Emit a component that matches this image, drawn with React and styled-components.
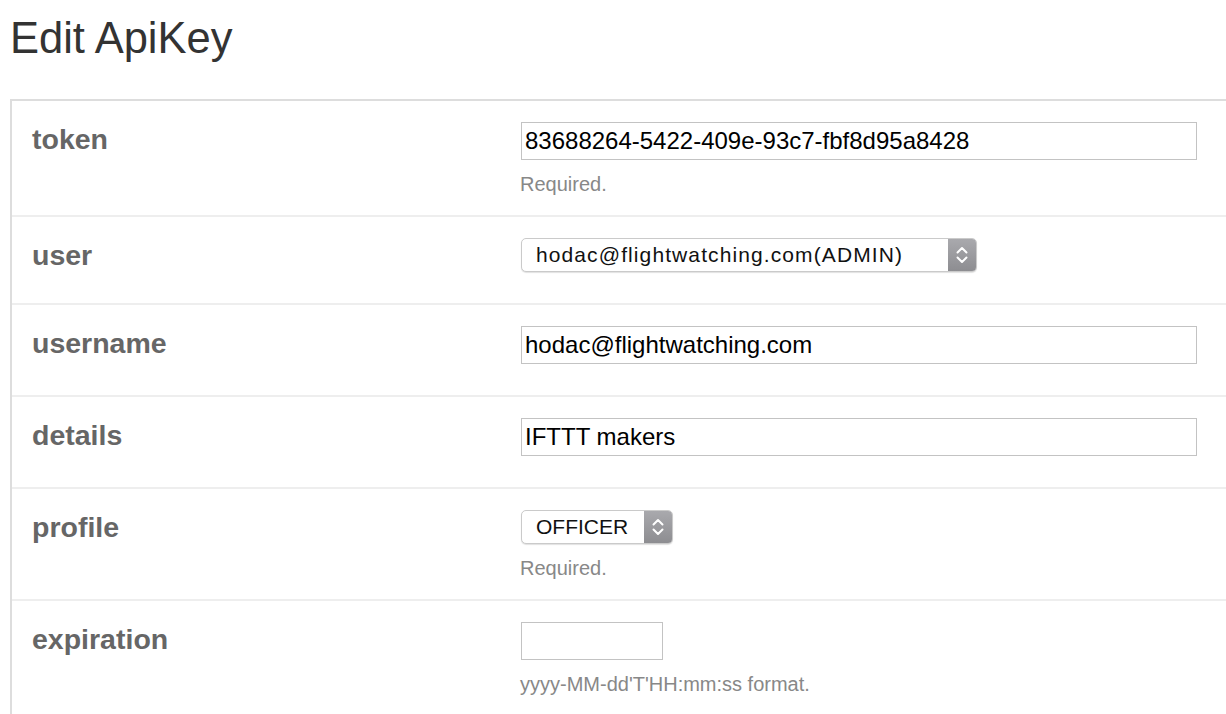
import React from 'react';
import styled, { createGlobalStyle } from 'styled-components';

const GlobalStyle = createGlobalStyle`
    html, body {
        margin: 0;
        padding: 0;
        background: #fff;
        overflow: hidden;
    }
    body {
        font-family: "Liberation Sans", Arial, Helvetica, sans-serif;
    }
`;

const Page = styled.div`
    padding: 14px 0 0 10px;
`;

const Title = styled.h1`
    margin: 0 0 37px 0;
    font-size: 43.5px;
    line-height: 48px;
    font-weight: 400;
    color: #333;
`;

const Panel = styled.div`
    border-top: 2px solid #ddd;
    border-left: 2px solid #ddd;
`;

const Row = styled.div`
    display: grid;
    grid-template-columns: 489px 1fr;
    padding: 21px 0 21px 20px;
    border-top: ${({ first }) => (first ? 'none' : '2px solid #eee')};
`;

const Label = styled.div`
    padding-top: 1px;
    font-size: 28.5px;
    line-height: 32px;
    font-weight: 700;
    color: #666;
`;

const Value = styled.div`
    display: flex;
    flex-direction: column;
    align-items: flex-start;
`;

const Control = styled.div`
    margin-bottom: 10px;
`;

const Input = styled.input`
    box-sizing: border-box;
    width: ${({ width }) => width}px;
    height: 38px;
    margin: 0;
    padding: 0 3px;
    border: 1px solid #c3c3c3;
    border-radius: 0;
    font-family: "Liberation Sans", Arial, sans-serif;
    font-size: 24px;
    color: #000;
    background: #fff;
    outline: none;
`;

const Select = styled.div`
    box-sizing: border-box;
    display: flex;
    align-items: stretch;
    width: ${({ width }) => width}px;
    height: 34px;
    border: 1px solid #cacaca;
    border-radius: 5px;
    box-shadow: 0 1px 1px rgba(0, 0, 0, 0.12);
    background: #fff;
    overflow: hidden;
`;

const SelectText = styled.span`
    flex: 1;
    padding-left: 14px;
    font-size: 21px;
    line-height: 32px;
    letter-spacing: ${({ spacing }) => spacing || 0}px;
    color: #111;
    white-space: nowrap;
`;

const SelectArrow = styled.span`
    width: 28px;
    display: flex;
    align-items: center;
    justify-content: center;
    background: linear-gradient(#a9a9ad, #8d8d91);
`;

const Help = styled.div`
    margin-top: 4px;
    margin-left: -1px;
    font-size: 20px;
    line-height: 20px;
    color: #888;
`;

function Chevrons() {
    return (
        <svg width="14" height="22" viewBox="0 0 14 22" fill="none">
            <path d="M2.5 8.5 L7 4 L11.5 8.5" stroke="#fff" strokeWidth="2" strokeLinecap="round" strokeLinejoin="round" />
            <path d="M2.5 13.5 L7 18 L11.5 13.5" stroke="#fff" strokeWidth="2" strokeLinecap="round" strokeLinejoin="round" />
        </svg>
    );
}

function Field({ label, help, first, children }) {
    return (
        <Row first={first}>
            <Label>{label}</Label>
            <Value>
                <Control>{children}</Control>
                {help && <Help>{help}</Help>}
            </Value>
        </Row>
    );
}

function Dropdown({ value, width, spacing }) {
    return (
        <Select width={width}>
            <SelectText spacing={spacing}>{value}</SelectText>
            <SelectArrow>
                <Chevrons />
            </SelectArrow>
        </Select>
    );
}

function App() {
    return (
        <Page>
            <GlobalStyle />
            <Title>Edit ApiKey</Title>
            <Panel>
                <Field first label="token" help="Required.">
                    <Input width={676} defaultValue="83688264-5422-409e-93c7-fbf8d95a8428" />
                </Field>
                <Field label="user">
                    <Dropdown width={456} spacing={1.1} value="hodac@flightwatching.com(ADMIN)" />
                </Field>
                <Field label="username">
                    <Input width={676} defaultValue="hodac@flightwatching.com" />
                </Field>
                <Field label="details">
                    <Input width={676} defaultValue="IFTTT makers" />
                </Field>
                <Field label="profile" help="Required.">
                    <Dropdown width={152} value="OFFICER" />
                </Field>
                <Field label="expiration" help="yyyy-MM-dd'T'HH:mm:ss format.">
                    <Input width={142} defaultValue="" />
                </Field>
            </Panel>
        </Page>
    );
}

export default App
